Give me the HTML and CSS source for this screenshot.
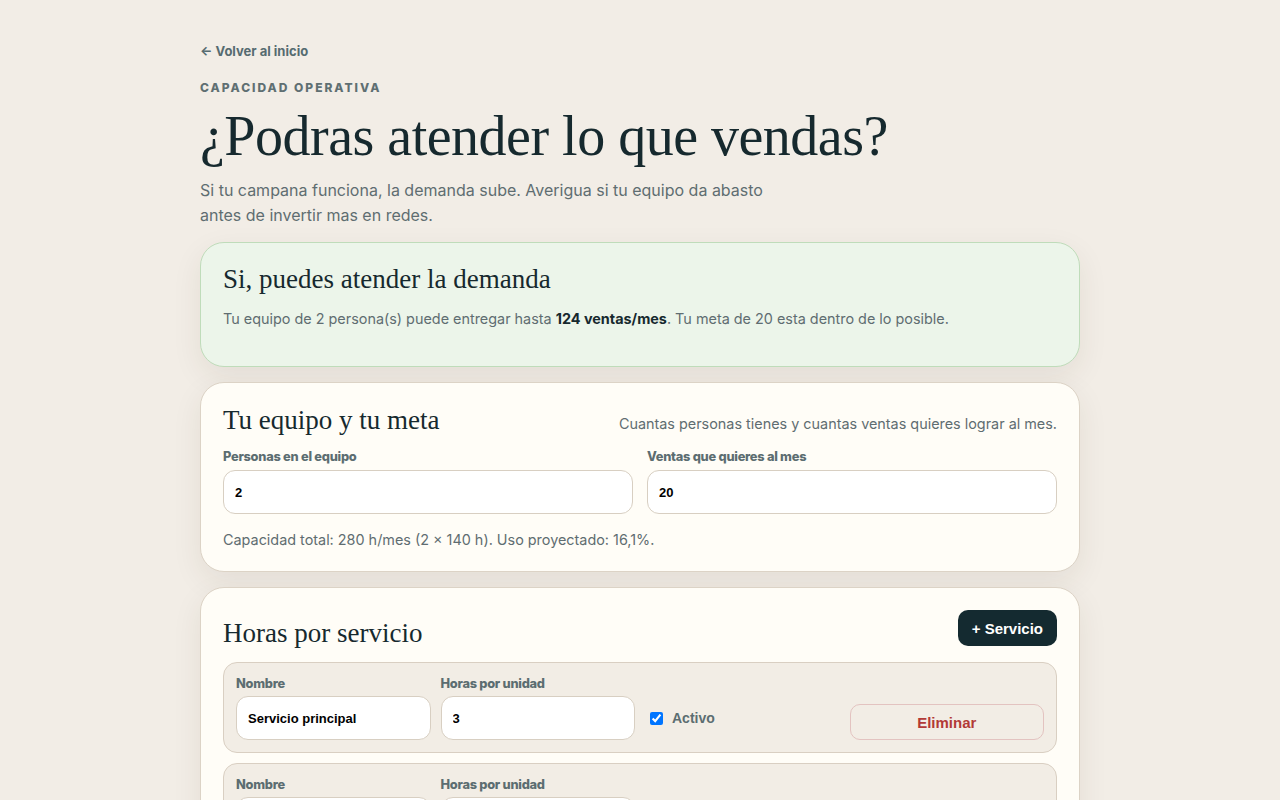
FILE: index.html
```html
<!DOCTYPE html>
<html lang="es">
<head>
<meta charset="utf-8">
<title>Capacidad operativa</title>
<link rel="stylesheet" href="styles.css">
</head>
<body>
<main class="page">
  <a class="back" href="#">← Volver al inicio</a>
  <p class="eyebrow">CAPACIDAD OPERATIVA</p>
  <h1 class="title">¿Podras atender lo que vendas?</h1>
  <p class="lead">Si tu campana funciona, la demanda sube. Averigua si tu equipo da abasto antes de invertir mas en redes.</p>

  <section class="card card-ok">
    <h2 class="card-title">Si, puedes atender la demanda</h2>
    <p class="card-text">Tu equipo de 2 persona(s) puede entregar hasta <strong>124 ventas/mes</strong>. Tu meta de 20 esta dentro de lo posible.</p>
  </section>

  <section class="card">
    <div class="card-head">
      <h2 class="card-title">Tu equipo y tu meta</h2>
      <p class="card-hint">Cuantas personas tienes y cuantas ventas quieres lograr al mes.</p>
    </div>
    <div class="grid2">
      <label class="field">
        <span class="label">Personas en el equipo</span>
        <input class="input" type="text" value="2">
      </label>
      <label class="field">
        <span class="label">Ventas que quieres al mes</span>
        <input class="input" type="text" value="20">
      </label>
    </div>
    <p class="note">Capacidad total: 280 h/mes (2 × 140 h). Uso proyectado: 16,1%.</p>
  </section>

  <section class="card">
    <div class="card-head card-head-btn">
      <h2 class="card-title">Horas por servicio</h2>
      <button class="btn-dark" type="button">+ Servicio</button>
    </div>
    <div class="service">
      <label class="field">
        <span class="label">Nombre</span>
        <input class="input" type="text" value="Servicio principal">
      </label>
      <label class="field">
        <span class="label">Horas por unidad</span>
        <input class="input" type="text" value="3">
      </label>
      <label class="check"><input type="checkbox" checked> <span>Activo</span></label>
      <button class="btn-del" type="button">Eliminar</button>
    </div>
    <div class="service">
      <label class="field">
        <span class="label">Nombre</span>
        <input class="input" type="text" value="Servicio secundario">
      </label>
      <label class="field">
        <span class="label">Horas por unidad</span>
        <input class="input" type="text" value="1">
      </label>
      <label class="check"><input type="checkbox" checked> <span>Activo</span></label>
      <button class="btn-del" type="button">Eliminar</button>
    </div>
  </section>
</main>
</body>
</html>
```
FILE: styles.css
```css
* { box-sizing: border-box; }
html, body { margin: 0; padding: 0; }
body {
  background: #f2ede6;
  font-family: Inter, "Noto Sans", sans-serif;
  color: #16292e;
}
.page {
  width: 880px;
  margin: 0 auto;
  padding: 40px 0 40px;
}
.back {
  display: inline-block;
  font-size: 13px;
  font-weight: 700;
  color: #566b70;
  text-decoration: none;
  line-height: 18px;
}
.eyebrow {
  margin: 20px 0 0;
  font-size: 12px;
  line-height: 16px;
  font-weight: 800;
  letter-spacing: 0.165em;
  color: #5f6f72;
}
.title {
  margin: 8px 0 0;
  font-family: "Liberation Serif", "DejaVu Serif", serif;
  font-weight: 400;
  font-size: 56px;
  line-height: 64px;
  letter-spacing: -0.5px;
  color: #16292e;
}
.lead {
  margin: 10px 0 0;
  max-width: 580px;
  font-size: 16px;
  line-height: 25px;
  color: #5f6d71;
}
.card {
  margin-top: 15px;
  background: #fffdf7;
  border: 1px solid #dcd3c6;
  border-radius: 24px;
  padding: 20px 22px 21px;
  box-shadow: 0 10px 30px rgba(60, 45, 25, 0.08);
}
.card-ok {
  margin-top: 14px;
  background: #ecf5ea;
  border-color: #bfdcba;
  padding-top: 19px;
  padding-bottom: 37px;
}
.card-title {
  margin: 0;
  font-family: "Liberation Serif", "DejaVu Serif", serif;
  font-weight: 400;
  font-size: 27px;
  line-height: 34px;
  color: #16292e;
}
.card-text {
  margin: 13px 0 0;
  font-size: 14.4px;
  line-height: 20px;
  color: #5f6d71;
}
.card-text strong { color: #16292e; font-weight: 700; }
.card-head {
  display: flex;
  align-items: baseline;
  justify-content: space-between;
  gap: 16px;
}
.card-hint {
  margin: 0;
  font-size: 14.4px;
  color: #5f6d71;
}
.card-head-btn {
  align-items: flex-end;
  margin-top: 2px;
}
.grid2 {
  display: grid;
  grid-template-columns: 1fr 1fr;
  gap: 14px;
  margin-top: 12px;
}
.field {
  display: flex;
  flex-direction: column;
  gap: 6px;
}
.label {
  font-size: 12.8px;
  line-height: 15px;
  font-weight: 800;
  letter-spacing: -0.25px;
  color: #5c6d71;
}
.input {
  height: 44px;
  border: 1px solid #d8cfc2;
  border-radius: 12px;
  background: #ffffff;
  padding: 0 11px;
  font-family: "Liberation Sans", Arial, sans-serif;
  font-size: 13px;
  font-weight: 700;
  color: #000;
  width: 100%;
}
.note {
  margin: 16px 0 0;
  font-size: 14.4px;
  line-height: 20px;
  color: #5f6d71;
}
.btn-dark {
  height: 36px;
  padding: 0 14px;
  border: 0;
  border-radius: 10px;
  background: #142a30;
  color: #fff;
  font-family: "Liberation Sans", Arial, sans-serif;
  font-size: 15px;
  font-weight: 700;
  margin-bottom: 4px;
}
.service {
  display: grid;
  grid-template-columns: repeat(4, 1fr);
  gap: 10px;
  align-items: end;
  margin-top: 12px;
  padding: 13px 12px 12px;
  background: #f2ede5;
  border: 1px solid #d9cfc2;
  border-radius: 14px;
}
.service .field { gap: 5px; }
.service + .service { margin-top: 10px; }
.check {
  display: flex;
  align-items: center;
  height: 44px;
  gap: 4px;
  font-family: "Liberation Sans", Arial, sans-serif;
  font-size: 14px;
  font-weight: 700;
  color: #5c6d71;
}
.check input { margin: 0 5px; width: 13px; height: 13px; }
.btn-del {
  height: 36px;
  border: 1px solid #e3c3c0;
  border-radius: 10px;
  background: transparent;
  color: #b23a37;
  font-family: "Liberation Sans", Arial, sans-serif;
  font-size: 15px;
  font-weight: 700;
  width: 100%;
}
```
